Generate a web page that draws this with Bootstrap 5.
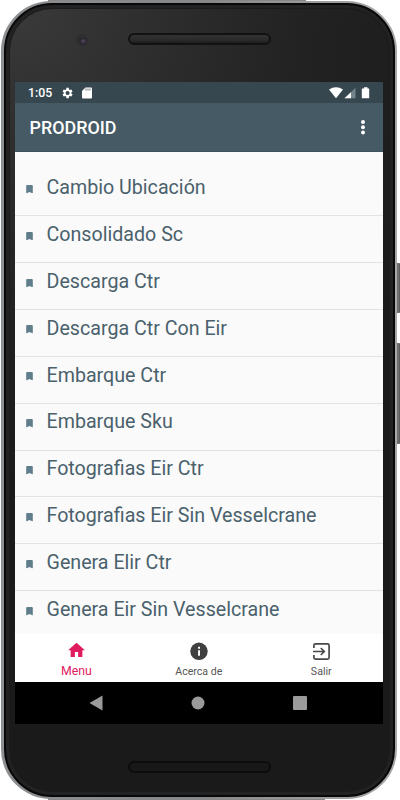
<!DOCTYPE html>
<html lang="es">
<head>
<meta charset="utf-8">
<meta name="viewport" content="width=device-width, initial-scale=1">
<title>PRODROID</title>
<link href="https://cdn.jsdelivr.net/npm/bootstrap@5.3.0/dist/css/bootstrap.min.css" rel="stylesheet">
<style>
body { font-family: Roboto, "Liberation Sans", sans-serif; background: #fff; }
.stage { width: 400px; height: 800px; }
.side-key { right: 0; width: 5px; background: linear-gradient(90deg, #444, #777 60%, #555); border-radius: 0 1px 1px 0; }
.key-power { top: 263px; height: 50px; }
.key-volume { top: 343px; height: 101px; }
.edge-dark { height: 2px; background: #888; }
.edge-top { left: 48px; top: 0; width: 258px; }
.edge-bottom { left: 48px; bottom: 0; width: 277px; }
.phone { margin: 1px 3px 1px 1px; width: 396px; height: 798px; border-radius: 50px; padding: 1.5px 2.5px 2px 2.5px;
  background: linear-gradient(90deg, #8d9092, #85888a 50%, #a8a8a8); }
.shell { border: 2px solid #080808; border-radius: 48px; padding: 0 9px;
  background: radial-gradient(circle at 10px 0, #3a3a3a 0, #303030 110px, #222 290px, #1a1a1a 480px);
  box-shadow: inset 0 0 0 3px #222, inset 0 0 0 4px #1c1c1c; }
.forehead { height: 77.5px; }
.camera { width: 12px; height: 12px; left: 70px; top: 29px;
  background: radial-gradient(circle at 60% 60%, #4b4354 0 1px, #29252e 3px, #302f31 5px, #2c2c2c 6px); }
.slot { width: 143px; height: 12px; border: 2.5px solid #121212; background: linear-gradient(#303030 20%, #292929 70%, #1c1c1c); }
.slot-top { margin-top: 28.500px; }
.slot-bottom { margin-top: 36.500px; background: #181818; border-color: #0c0c0c; }
.screen { width: 368px; height: 642px; margin-left: -1px; background: #fafafa; }
.statusbar { height: 20.5px; background: #37474f; padding: 1px 12.500px 0 13.500px; font-size: 12.3px; font-weight: 500; }
.appbar { height: 49px; background: #455a64; padding: 0 17px 0 15px; border-bottom: 1px solid #3c5260; }
.app-title { font-size: 17.9px; font-weight: 500; line-height: 1; margin-top: 2.500px; }
.menu-list { height: 482.500px; padding-top: 17.500px; }
.menu-row { height: 46.930px; padding: 0 0 0 11px; border-bottom: 1.500px solid #e3e3e3; color: #4a616c;
  font-size: 19.650px; line-height: 1; }
.menu-row:last-child { border-bottom-color: transparent; }
.menu-row svg { margin: -6px 14px 0 0; }
.menu-row span { margin-top: -8.500px; }
.tabs { height: 47.500px; background: #fff; color: #555; font-size: 10.600px; line-height: 1; padding-left: .6px; }
.tab-item { width: 122.500px; padding-top: 7.500px; }
.tab-active { color: #e01b60; font-size: 12.300px; }
.tab-glyph { height: 18px; }
.tab-name { height: 12px; margin-top: 6px; line-height: 12px; }
.tab-active .tab-name { margin-top: 5.500px; }
.softkeys { height: 42.500px; background: #000; padding: 0 75.500px 0 74.500px; }
</style>
<script src="https://cdn.jsdelivr.net/npm/bootstrap@5.3.0/dist/js/bootstrap.bundle.min.js"></script>
</head>
<body class="m-0 overflow-hidden">
<svg width="0" height="0" class="position-absolute" aria-hidden="true">
  <symbol id="bookmark" viewBox="0 0 7 9"><path d="M1 0h5q1 0 1 1v8L3.500 7.300 0 9V1q0-1 1-1z" fill="#607d8b"/></symbol>
</svg>
<div class="stage position-relative overflow-hidden">
  <div class="side-key key-power position-absolute"></div>
  <div class="side-key key-volume position-absolute"></div>
  <div class="edge-dark edge-top position-absolute"></div>
  <div class="edge-dark edge-bottom position-absolute"></div>
  <div class="d-flex"><div class="phone position-relative">
    <div class="shell h-100 d-flex flex-column align-items-center position-relative">
      <div class="forehead w-100 d-flex justify-content-center">
        <div class="camera position-absolute rounded-circle"></div>
        <div class="slot slot-top rounded-pill"></div>
      </div>
      <main class="screen d-flex flex-column flex-shrink-0">
        <div class="statusbar d-flex align-items-center text-white">
          <span>1:05</span>
          <svg class="ms-2" width="14" height="14" viewBox="0 0 24 24" fill="#fff"><path d="M19.400 13c.1-.7.1-1.300 0-2l2.100-1.600-2-3.500-2.500 1a8 8 0 0 0-1.700-1L15 3.200h-4l-.4 2.700a8 8 0 0 0-1.700 1l-2.500-1-2 3.500L6.500 11a8 8 0 0 0 0 2l-2.100 1.600 2 3.500 2.500-1a8 8 0 0 0 1.700 1l.4 2.700h4l.4-2.700a8 8 0 0 0 1.700-1l2.500 1 2-3.500zM13 15.500a3.500 3.500 0 1 1 0-7 3.500 3.500 0 0 1 0 7z" fill-rule="evenodd"/></svg>
          <svg class="ms-2" width="10" height="12" viewBox="0 0 10 12"><path d="M3.500.5H9q1 0 1 1v9q0 1-1 1H1q-1 0-1-1V4z" fill="#fff"/><path d="M4 1.500v2M6 1.500v2M8 1.500v2" stroke="#37474f" stroke-width=".8"/></svg>
          <svg class="ms-auto" width="41" height="12" viewBox="0 0 41 12"><path d="M0 2.500Q7-2.200 14 2.500L7 11.300z" fill="#fff"/><path d="M26.500.7v10.600H15.500z" fill="#74838a"/><path d="M22 5.200v6.100h-6.500z" fill="#fff"/><path d="M35 .3h3.500v1.200h1.700v9.800h-7.400V1.500H35z" fill="#fff"/></svg>
        </div>
        <nav class="appbar d-flex align-items-center justify-content-between text-white">
          <span class="app-title">PRODROID</span>
          <svg width="6" height="16" viewBox="0 0 6 16" fill="#fff"><circle cx="3" cy="2.900" r="2"/><circle cx="3" cy="8.200" r="2"/><circle cx="3" cy="13.500" r="2"/></svg>
        </nav>
        <div class="menu-list overflow-hidden">
          <div class="menu-row d-flex align-items-center"><svg width="7" height="8.500"><use href="#bookmark"/></svg><span>Cambio Ubicación</span></div>
          <div class="menu-row d-flex align-items-center"><svg width="7" height="8.500"><use href="#bookmark"/></svg><span>Consolidado Sc</span></div>
          <div class="menu-row d-flex align-items-center"><svg width="7" height="8.500"><use href="#bookmark"/></svg><span>Descarga Ctr</span></div>
          <div class="menu-row d-flex align-items-center"><svg width="7" height="8.500"><use href="#bookmark"/></svg><span>Descarga Ctr Con Eir</span></div>
          <div class="menu-row d-flex align-items-center"><svg width="7" height="8.500"><use href="#bookmark"/></svg><span>Embarque Ctr</span></div>
          <div class="menu-row d-flex align-items-center"><svg width="7" height="8.500"><use href="#bookmark"/></svg><span>Embarque Sku</span></div>
          <div class="menu-row d-flex align-items-center"><svg width="7" height="8.500"><use href="#bookmark"/></svg><span>Fotografias Eir Ctr</span></div>
          <div class="menu-row d-flex align-items-center"><svg width="7" height="8.500"><use href="#bookmark"/></svg><span>Fotografias Eir Sin Vesselcrane</span></div>
          <div class="menu-row d-flex align-items-center"><svg width="7" height="8.500"><use href="#bookmark"/></svg><span>Genera Elir Ctr</span></div>
          <div class="menu-row d-flex align-items-center"><svg width="7" height="8.500"><use href="#bookmark"/></svg><span>Genera Eir Sin Vesselcrane</span></div>
        </div>
        <div class="tabs d-flex">
          <div class="tab-item tab-active d-flex flex-column align-items-center">
            <div class="tab-glyph d-flex align-items-start"><svg width="17" height="16" viewBox="0 0 18 16"><path d="M7.300 15.500V10h3.400v5.500h4.500V8.200h2.700L9 .3.100 8.200h2.700v7.300z" fill="#e01b60"/></svg></div>
            <span class="tab-name">Menu</span>
          </div>
          <div class="tab-item d-flex flex-column align-items-center">
            <div class="tab-glyph d-flex align-items-end"><svg width="18" height="18" viewBox="0 0 18 18"><circle cx="9" cy="9.300" r="8.700" fill="#404040"/><path d="M8.100 4.700h1.900v2H8.100zM8.100 8.200h1.900v5.600H8.100z" fill="#fff"/></svg></div>
            <span class="tab-name">Acerca de</span>
          </div>
          <div class="tab-item d-flex flex-column align-items-center">
            <div class="tab-glyph d-flex align-items-end"><svg width="17" height="17" viewBox="0 0 17 17" fill="none" stroke="#484848" stroke-width="1.700"><path d="M.9 5V2.400Q.9.900 2.400.9h12.200q1.500 0 1.500 1.500v12.200q0 1.500-1.500 1.500H2.400q-1.500 0-1.500-1.500V12M0 8.500h11M7.800 5l3.500 3.500L7.800 12"/></svg></div>
            <span class="tab-name">Salir</span>
          </div>
        </div>
        <div class="softkeys d-flex align-items-center justify-content-between">
          <svg width="14" height="16" viewBox="0 0 14 16"><path d="M13.500.5v15L.5 8z" fill="#9a9a9a"/></svg>
          <svg width="14" height="14" viewBox="0 0 14 14"><circle cx="7" cy="7" r="6.500" fill="#9a9a9a"/></svg>
          <svg width="14" height="14" viewBox="0 0 14 14"><rect width="14" height="14" rx="1" fill="#9a9a9a"/></svg>
        </div>
      </main>
      <div class="slot slot-bottom rounded-pill flex-shrink-0"></div>
    </div>
  </div></div>
</div>
</body>
</html>
